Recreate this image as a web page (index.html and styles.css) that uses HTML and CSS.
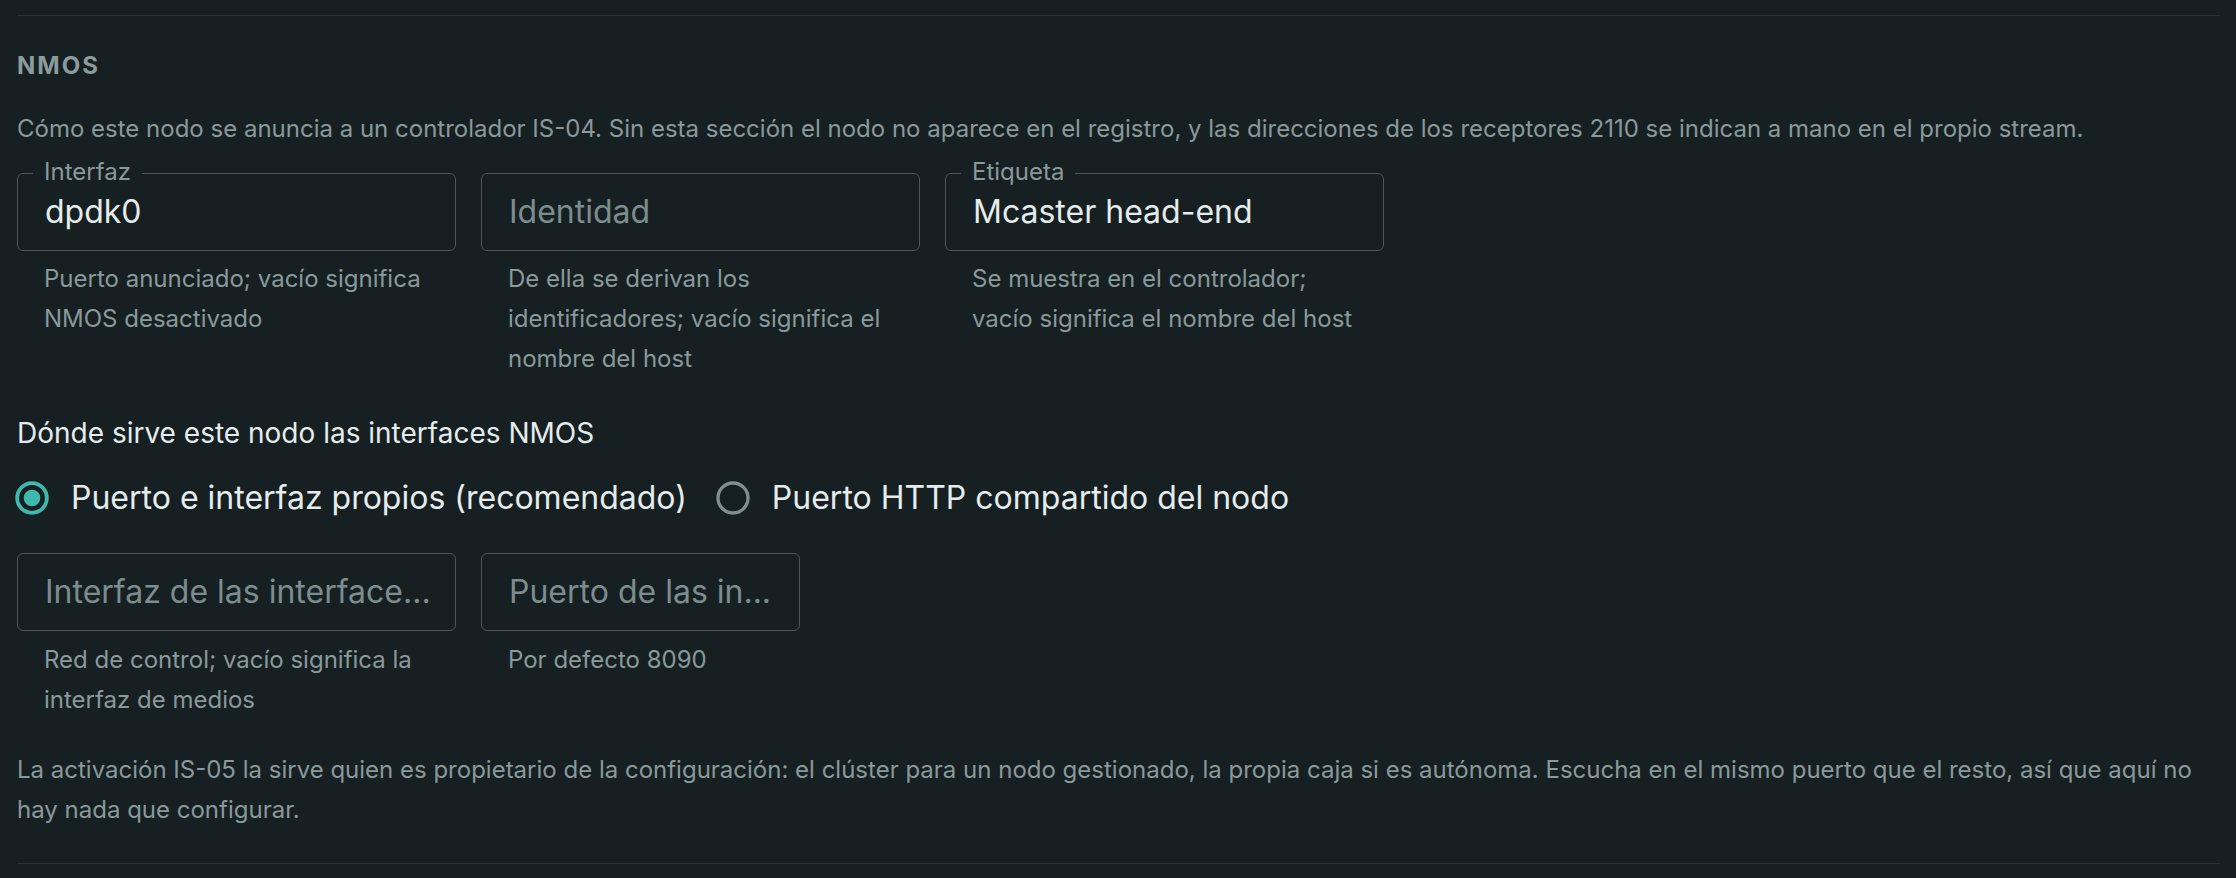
FILE: index.html
```html
<!DOCTYPE html>
<html lang="es">
<head>
<meta charset="utf-8">
<title>NMOS</title>
<link rel="stylesheet" href="styles.css">
</head>
<body>
<section class="section">
  <h2 class="overline">NMOS</h2>
  <p class="desc">Cómo este nodo se anuncia a un controlador IS-04. Sin esta sección el nodo no aparece en el registro, y las direcciones de los receptores 2110 se indican a mano en el propio stream.</p>

  <div class="fields">
    <div class="field">
      <div class="box">
        <span class="float-label">Interfaz</span>
        <span class="value">dpdk0</span>
      </div>
      <p class="helper">Puerto anunciado; vacío significa NMOS desactivado</p>
    </div>
    <div class="field">
      <div class="box">
        <span class="placeholder">Identidad</span>
      </div>
      <p class="helper">De ella se derivan los identificadores; vacío significa el nombre del host</p>
    </div>
    <div class="field">
      <div class="box">
        <span class="float-label">Etiqueta</span>
        <span class="value">Mcaster head-end</span>
      </div>
      <p class="helper">Se muestra en el controlador; vacío significa el nombre del host</p>
    </div>
  </div>

  <h3 class="subhead">Dónde sirve este nodo las interfaces NMOS</h3>

  <div class="radios">
    <label class="radio">
      <svg class="radio-icon checked" viewBox="0 0 24 24" width="40" height="40"><circle cx="12" cy="12" r="8.9" fill="none" stroke="currentColor" stroke-width="2.3"/><circle cx="12" cy="12" r="5" fill="currentColor"/></svg>
      <span class="radio-text">Puerto e interfaz propios (recomendado)</span>
    </label>
    <label class="radio">
      <svg class="radio-icon" viewBox="0 0 24 24" width="40" height="40"><circle cx="12" cy="12" r="9" fill="none" stroke="currentColor" stroke-width="2"/></svg>
      <span class="radio-text">Puerto HTTP compartido del nodo</span>
    </label>
  </div>

  <div class="fields">
    <div class="field">
      <div class="box">
        <span class="placeholder" title="Interfaz de las interfaces NMOS">Interfaz de las interface...</span>
      </div>
      <p class="helper">Red de control; vacío significa la interfaz de medios</p>
    </div>
    <div class="field narrow">
      <div class="box">
        <span class="placeholder" title="Puerto de las interfaces NMOS">Puerto de las in...</span>
      </div>
      <p class="helper">Por defecto 8090</p>
    </div>
  </div>

  <p class="desc last">La activación IS-05 la sirve quien es propietario de la configuración: el clúster para un nodo gestionado, la propia caja si es autónoma. Escucha en el mismo puerto que el resto, así que aquí no hay nada que configurar.</p>
</section>
</body>
</html>
```

FILE: styles.css
```css
html, body {
  margin: 0;
  padding: 0;
  background: #162022;
}

body {
  font-family: Inter, "Noto Sans", "Liberation Sans", sans-serif;
  color: #e4eaea;
  padding-top: 15px;
}

.section {
  margin: 0 16px 0 17px;
  border-top: 1px solid #263234;
  border-bottom: 1px solid #263234;
  padding: 34px 0 33px;
}

.overline {
  margin: 0;
  font-size: 24px;
  line-height: 32px;
  font-weight: 700;
  letter-spacing: 2px;
  color: #8c9b9c;
}

.desc {
  margin: 27px 0 0;
  font-size: 24px;
  line-height: 40px;
  color: #8a999a;
}

.desc.last {
  margin-top: 30px;
}

.fields {
  display: flex;
  gap: 25px;
  margin-top: 24px;
}

.field {
  width: 439px;
}

.field.narrow {
  width: 319px;
}

.box {
  position: relative;
  box-sizing: border-box;
  height: 78px;
  border: 1px solid #4a5658;
  border-radius: 6px;
  padding: 0 27px;
  display: flex;
  align-items: center;
  font-size: 32px;
  line-height: 40px;
  white-space: nowrap;
}

.float-label {
  position: absolute;
  left: 15px;
  top: -16px;
  padding: 0 11px;
  background: #162022;
  font-size: 24px;
  line-height: 28px;
  color: #8a999a;
}

.value {
  color: #e6ecec;
}

.placeholder {
  color: #7d8c8d;
}

.helper {
  margin: 8px 27px 0;
  font-size: 24px;
  line-height: 40px;
  color: #8a999a;
}

.subhead {
  margin: 34px 0 0;
  font-size: 28px;
  line-height: 40px;
  font-weight: 400;
  color: #e6ecec;
}

.radios {
  display: flex;
  align-items: center;
  height: 60px;
  margin-top: 15px;
  gap: 26px;
}

.radio {
  display: flex;
  align-items: center;
  gap: 19px;
}

.radio-icon {
  display: block;
  margin-left: -5px;
  color: #7f8f8f;
}

.radio-icon.checked {
  color: #3fb8ad;
}

.radio + .radio .radio-icon {
  margin-left: 0;
}

.radio-text {
  font-size: 32px;
  line-height: 40px;
  color: #e6ecec;
}

.radios + .fields {
  margin-top: 25px;
}

.radios + .fields .helper {
  margin-top: 9px;
}
```
